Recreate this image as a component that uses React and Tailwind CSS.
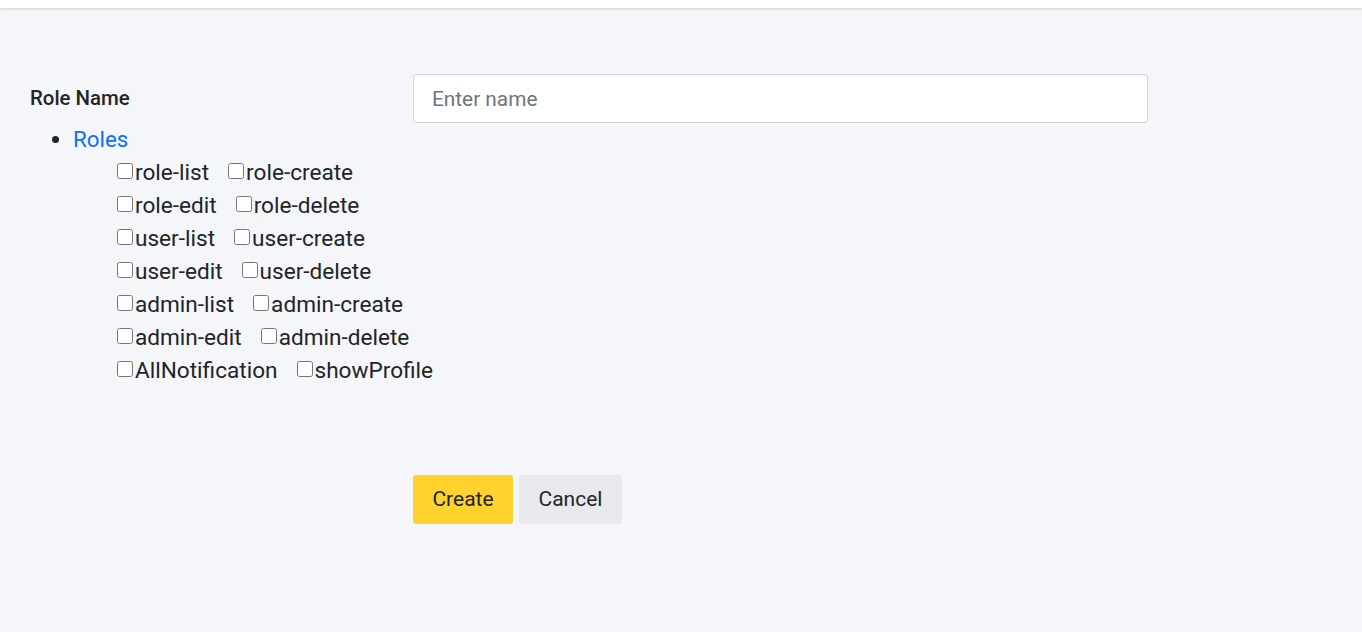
import { useState } from 'react';

const permissionRows = [
  ['role-list', 'role-create'],
  ['role-edit', 'role-delete'],
  ['user-list', 'user-create'],
  ['user-edit', 'user-delete'],
  ['admin-list', 'admin-create'],
  ['admin-edit', 'admin-delete'],
  ['AllNotification', 'showProfile'],
];

export default function App() {
  const [name, setName] = useState('');
  const [checked, setChecked] = useState({});

  const toggle = (perm) => setChecked((c) => ({ ...c, [perm]: !c[perm] }));

  return (
    <div className="min-h-screen bg-[#f5f6fa] text-[#212529]" style={{ fontFamily: 'Roboto, "Noto Sans", sans-serif' }}>
      <div className="h-2 bg-white shadow-[0_1px_3px_rgba(0,0,0,0.18)]"></div>

      <div className="pl-[30px] pt-[66px]">
        {/* Role name row */}
        <div className="flex items-center">
          <label className="w-[383px] text-[20.4px] font-medium">Role Name</label>
          <input
            value={name}
            onChange={(e) => setName(e.target.value)}
            placeholder="Enter name"
            className="w-[735px] h-[49px] px-[18px] bg-white border border-[#ced4da] rounded-[3px] text-[20.8px] text-[#495057] placeholder:text-[#6c757d] outline-none"
          />
        </div>

        {/* Permissions */}
        <ul className="list-disc pl-[43px] leading-[33px]">
          <li className="text-[22.3px]">
            <a href="#" className="text-[#0d6efd]">Roles</a>
            <div className="pl-[44px] flex flex-col text-[22.6px]">
              {permissionRows.map((row) => (
                <div key={row[0]} className="flex items-center gap-[19px] h-[33px]">
                  {row.map((perm) => (
                    <label key={perm} className="flex items-center">
                      <input
                        type="checkbox"
                        checked={!!checked[perm]}
                        onChange={() => toggle(perm)}
                        className="w-[16px] h-[16px] m-0 mr-[2px] mb-[3px]"
                      />
                      <span>{perm}</span>
                    </label>
                  ))}
                </div>
              ))}
            </div>
          </li>
        </ul>

        {/* Actions */}
        <div className="flex gap-[6px] pl-[383px] mt-[88px]">
          <button className="w-[100px] h-[49px] bg-[#ffd22e] rounded-[3px] text-[21px] text-[#212529]">Create</button>
          <button className="w-[103px] h-[49px] bg-[#e8e9ec] rounded-[3px] text-[21px] text-[#212529]">Cancel</button>
        </div>
      </div>
    </div>
  );
}
